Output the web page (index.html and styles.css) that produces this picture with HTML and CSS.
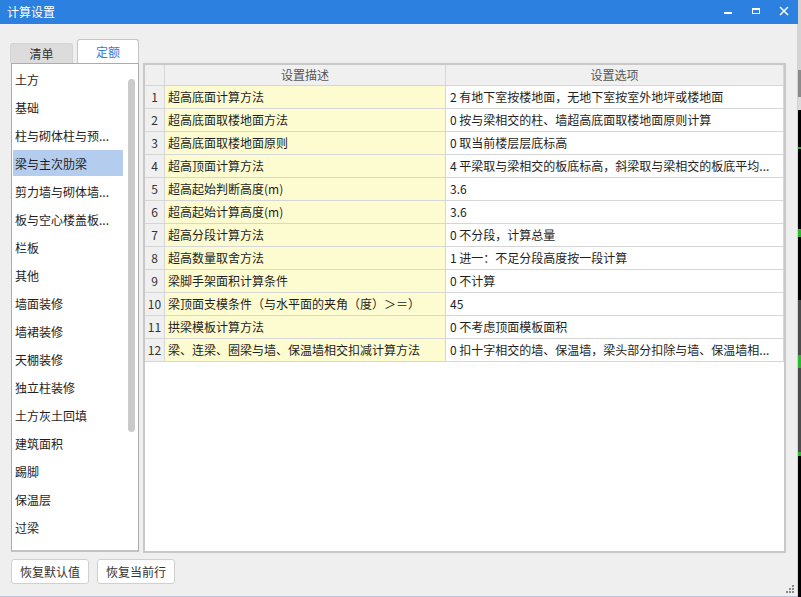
FILE: index.html
```html
<!DOCTYPE html>
<html lang="zh-CN">
<head>
<meta charset="utf-8">
<title>计算设置</title>
<link rel="stylesheet" href="styles.css">
</head>
<body>
<div class="window">
  <div class="titlebar">
    <span class="title">计算设置</span>
    <div class="controls">
      <button class="ctl" aria-label="最小化">
        <svg width="28" height="24" viewBox="0 0 28 24"><rect x="10" y="12" width="8" height="2" fill="#fff"/></svg>
      </button>
      <button class="ctl" aria-label="最大化">
        <svg width="28" height="24" viewBox="0 0 28 24"><rect x="10.5" y="8.5" width="7" height="5" fill="none" stroke="#fff" stroke-width="1"/><rect x="10" y="8" width="8" height="2" fill="#fff"/></svg>
      </button>
      <button class="ctl" aria-label="关闭">
        <svg width="28" height="24" viewBox="0 0 28 24"><path d="M10 7 L18 15 M18 7 L10 15" stroke="#fff" stroke-width="1.5" fill="none"/></svg>
      </button>
    </div>
  </div>
  <div class="body">
    <div class="tabs">
      <div class="tab">清单</div>
      <div class="tab active">定额</div>
    </div>
    <div class="main">
      <div class="listbox">
        <ul class="list">
          <li>土方</li>
          <li>基础</li>
          <li>柱与砌体柱与预...</li>
          <li class="selected">梁与主次肋梁</li>
          <li>剪力墙与砌体墙...</li>
          <li>板与空心楼盖板...</li>
          <li>栏板</li>
          <li>其他</li>
          <li>墙面装修</li>
          <li>墙裙装修</li>
          <li>天棚装修</li>
          <li>独立柱装修</li>
          <li>土方灰土回填</li>
          <li>建筑面积</li>
          <li>踢脚</li>
          <li>保温层</li>
          <li>过梁</li>
          <li>脚手架</li>
        </ul>
        <div class="thumb"></div>
      </div>
      <div class="panel">
        <table class="grid">
          <colgroup>
            <col class="c-num">
            <col class="c-desc">
            <col class="c-opt">
          </colgroup>
          <thead>
            <tr><th></th><th>设置描述</th><th>设置选项</th></tr>
          </thead>
          <tbody>
            <tr><td class="num">1</td><td class="desc">超高底面计算方法</td><td class="opt">2 有地下室按楼地面，无地下室按室外地坪或楼地面</td></tr>
            <tr><td class="num">2</td><td class="desc">超高底面取楼地面方法</td><td class="opt">0 按与梁相交的柱、墙超高底面取楼地面原则计算</td></tr>
            <tr><td class="num">3</td><td class="desc">超高底面取楼地面原则</td><td class="opt">0 取当前楼层层底标高</td></tr>
            <tr><td class="num">4</td><td class="desc">超高顶面计算方法</td><td class="opt">4 平梁取与梁相交的板底标高，斜梁取与梁相交的板底平均...</td></tr>
            <tr><td class="num">5</td><td class="desc">超高起始判断高度(m)</td><td class="opt">3.6</td></tr>
            <tr><td class="num">6</td><td class="desc">超高起始计算高度(m)</td><td class="opt">3.6</td></tr>
            <tr><td class="num">7</td><td class="desc">超高分段计算方法</td><td class="opt">0 不分段，计算总量</td></tr>
            <tr><td class="num">8</td><td class="desc">超高数量取舍方法</td><td class="opt">1 进一：不足分段高度按一段计算</td></tr>
            <tr><td class="num">9</td><td class="desc">梁脚手架面积计算条件</td><td class="opt">0 不计算</td></tr>
            <tr><td class="num">10</td><td class="desc">梁顶面支模条件（与水平面的夹角（度）＞＝）</td><td class="opt">45</td></tr>
            <tr><td class="num">11</td><td class="desc">拱梁模板计算方法</td><td class="opt">0 不考虑顶面模板面积</td></tr>
            <tr><td class="num">12</td><td class="desc">梁、连梁、圈梁与墙、保温墙相交扣减计算方法</td><td class="opt">0 扣十字相交的墙、保温墙，梁头部分扣除与墙、保温墙相...</td></tr>
          </tbody>
        </table>
      </div>
    </div>
    <div class="actions">
      <button class="btn">恢复默认值</button>
      <button class="btn">恢复当前行</button>
    </div>
  </div>
  <svg class="grip" width="8" height="8" viewBox="0 0 8 8">
    <rect x="6" y="0" width="2" height="2" fill="#8a8a8a"/>
    <rect x="3" y="3" width="2" height="2" fill="#8a8a8a"/>
    <rect x="6" y="3" width="2" height="2" fill="#8a8a8a"/>
    <rect x="0" y="6" width="2" height="2" fill="#8a8a8a"/>
    <rect x="3" y="6" width="2" height="2" fill="#8a8a8a"/>
    <rect x="6" y="6" width="2" height="2" fill="#8a8a8a"/>
  </svg>
</div>
</body>
</html>
```

FILE: styles.css
```css
* { box-sizing: border-box; }

html, body {
  margin: 0;
  height: 100%;
}

body {
  overflow: hidden;
  font-family: "Noto Sans CJK SC", sans-serif;
  font-size: 12px;
  color: #1e1e1e;
  background: linear-gradient(to bottom,
    #d4d4d4 0 70px,
    #8a8a8a 70px 97px,
    #dcdcdc 97px 110px,
    #000 110px 147px,
    #2aa52a 147px 149px,
    #000 149px 229px,
    #2db52d 229px 237px,
    #000 237px 300px,
    #4b4b4b 300px 355px,
    #2db52d 355px 368px,
    #4b4b4b 368px 452px,
    #2db52d 452px 456px,
    #000 456px);
}

.window {
  position: relative;
  width: 798px;
  height: 597px;
  display: flex;
  flex-direction: column;
  background: #efefef;
}

.titlebar {
  height: 24px;
  flex: none;
  display: flex;
  align-items: center;
  background: #2c80e0;
  color: #fff;
}

.title {
  flex: 1;
  padding-left: 7px;
  line-height: 24px;
}

.controls { display: flex; }

.ctl {
  width: 28px;
  height: 24px;
  padding: 0;
  border: 0;
  background: transparent;
}

.ctl svg { display: block; }

.body {
  flex: 1;
  display: flex;
  flex-direction: column;
  padding: 15px 0 0 10px;
  border-right: 1px solid #d2d2d2;
  border-bottom: 1px solid #b9c3d2;
}

.tabs {
  display: flex;
  align-items: flex-end;
  gap: 4px;
  height: 24px;
}

.tab {
  width: 63px;
  height: 20px;
  line-height: 19px;
  text-align: center;
  background: #dcdcdc;
  border: 1px solid #d4d4d4;
  border-bottom: 0;
  border-radius: 3px 3px 0 0;
  color: #333;
}

.tab.active {
  width: 62px;
  height: 24px;
  line-height: 23px;
  background: #fff;
  border-color: #c6c6c6;
  color: #2c80e0;
}

.main {
  display: flex;
  height: 490px;
  margin-left: 1px;
}

.listbox {
  position: relative;
  width: 128px;
  height: 489px;
  overflow: hidden;
  background: #fff;
  border: 1px solid #acacac;
  border-bottom: 2px solid #c3c3c3;
}

.list {
  list-style: none;
  margin: 0;
  padding: 2px 0 0 1px;
}

.list li {
  width: 110px;
  height: 26px;
  line-height: 28px;
  margin-bottom: 2px;
  padding-left: 2px;
  white-space: nowrap;
  overflow: hidden;
}

.list li.selected { background: #b4cdee; }

.thumb {
  position: absolute;
  top: 15px;
  right: 3px;
  width: 7px;
  height: 353px;
  border-radius: 4px;
  background: #cacaca;
}

.panel {
  width: 643px;
  height: 490px;
  margin-left: 4px;
  background: #fff;
  border: 2px solid #c8c8c8;
}

.grid {
  width: 639px;
  table-layout: fixed;
  border-collapse: separate;
  border-spacing: 0;
}

.c-num { width: 20px; }
.c-desc { width: 281px; }
.c-opt { width: 338px; }

.grid th,
.grid td {
  padding: 0;
  border-right: 1px solid #d6d6d6;
  border-bottom: 1px solid #d6d6d6;
  white-space: nowrap;
  overflow: hidden;
  font-weight: normal;
  text-align: left;
}

.grid th {
  height: 21px;
  line-height: 20px;
  background: #f0f0f0;
  color: #555;
  text-align: center;
}

.grid td {
  height: 23px;
  line-height: 22px;
}

.grid td.num {
  background: #f0f0f0;
  color: #333;
  text-align: center;
}

.grid td.desc {
  background: #fdfbd0;
  padding-left: 3px;
}

.grid td.opt { padding-left: 4px; }

.actions {
  display: flex;
  gap: 8px;
  margin-top: 6px;
  margin-left: 1px;
}

.btn {
  width: 78px;
  height: 25px;
  padding: 0;
  background: #fff;
  border: 1px solid #d0d0d0;
  border-radius: 3px;
  font: inherit;
  color: #333;
}

.grip {
  position: absolute;
  left: 786px;
  top: 585px;
}
```
